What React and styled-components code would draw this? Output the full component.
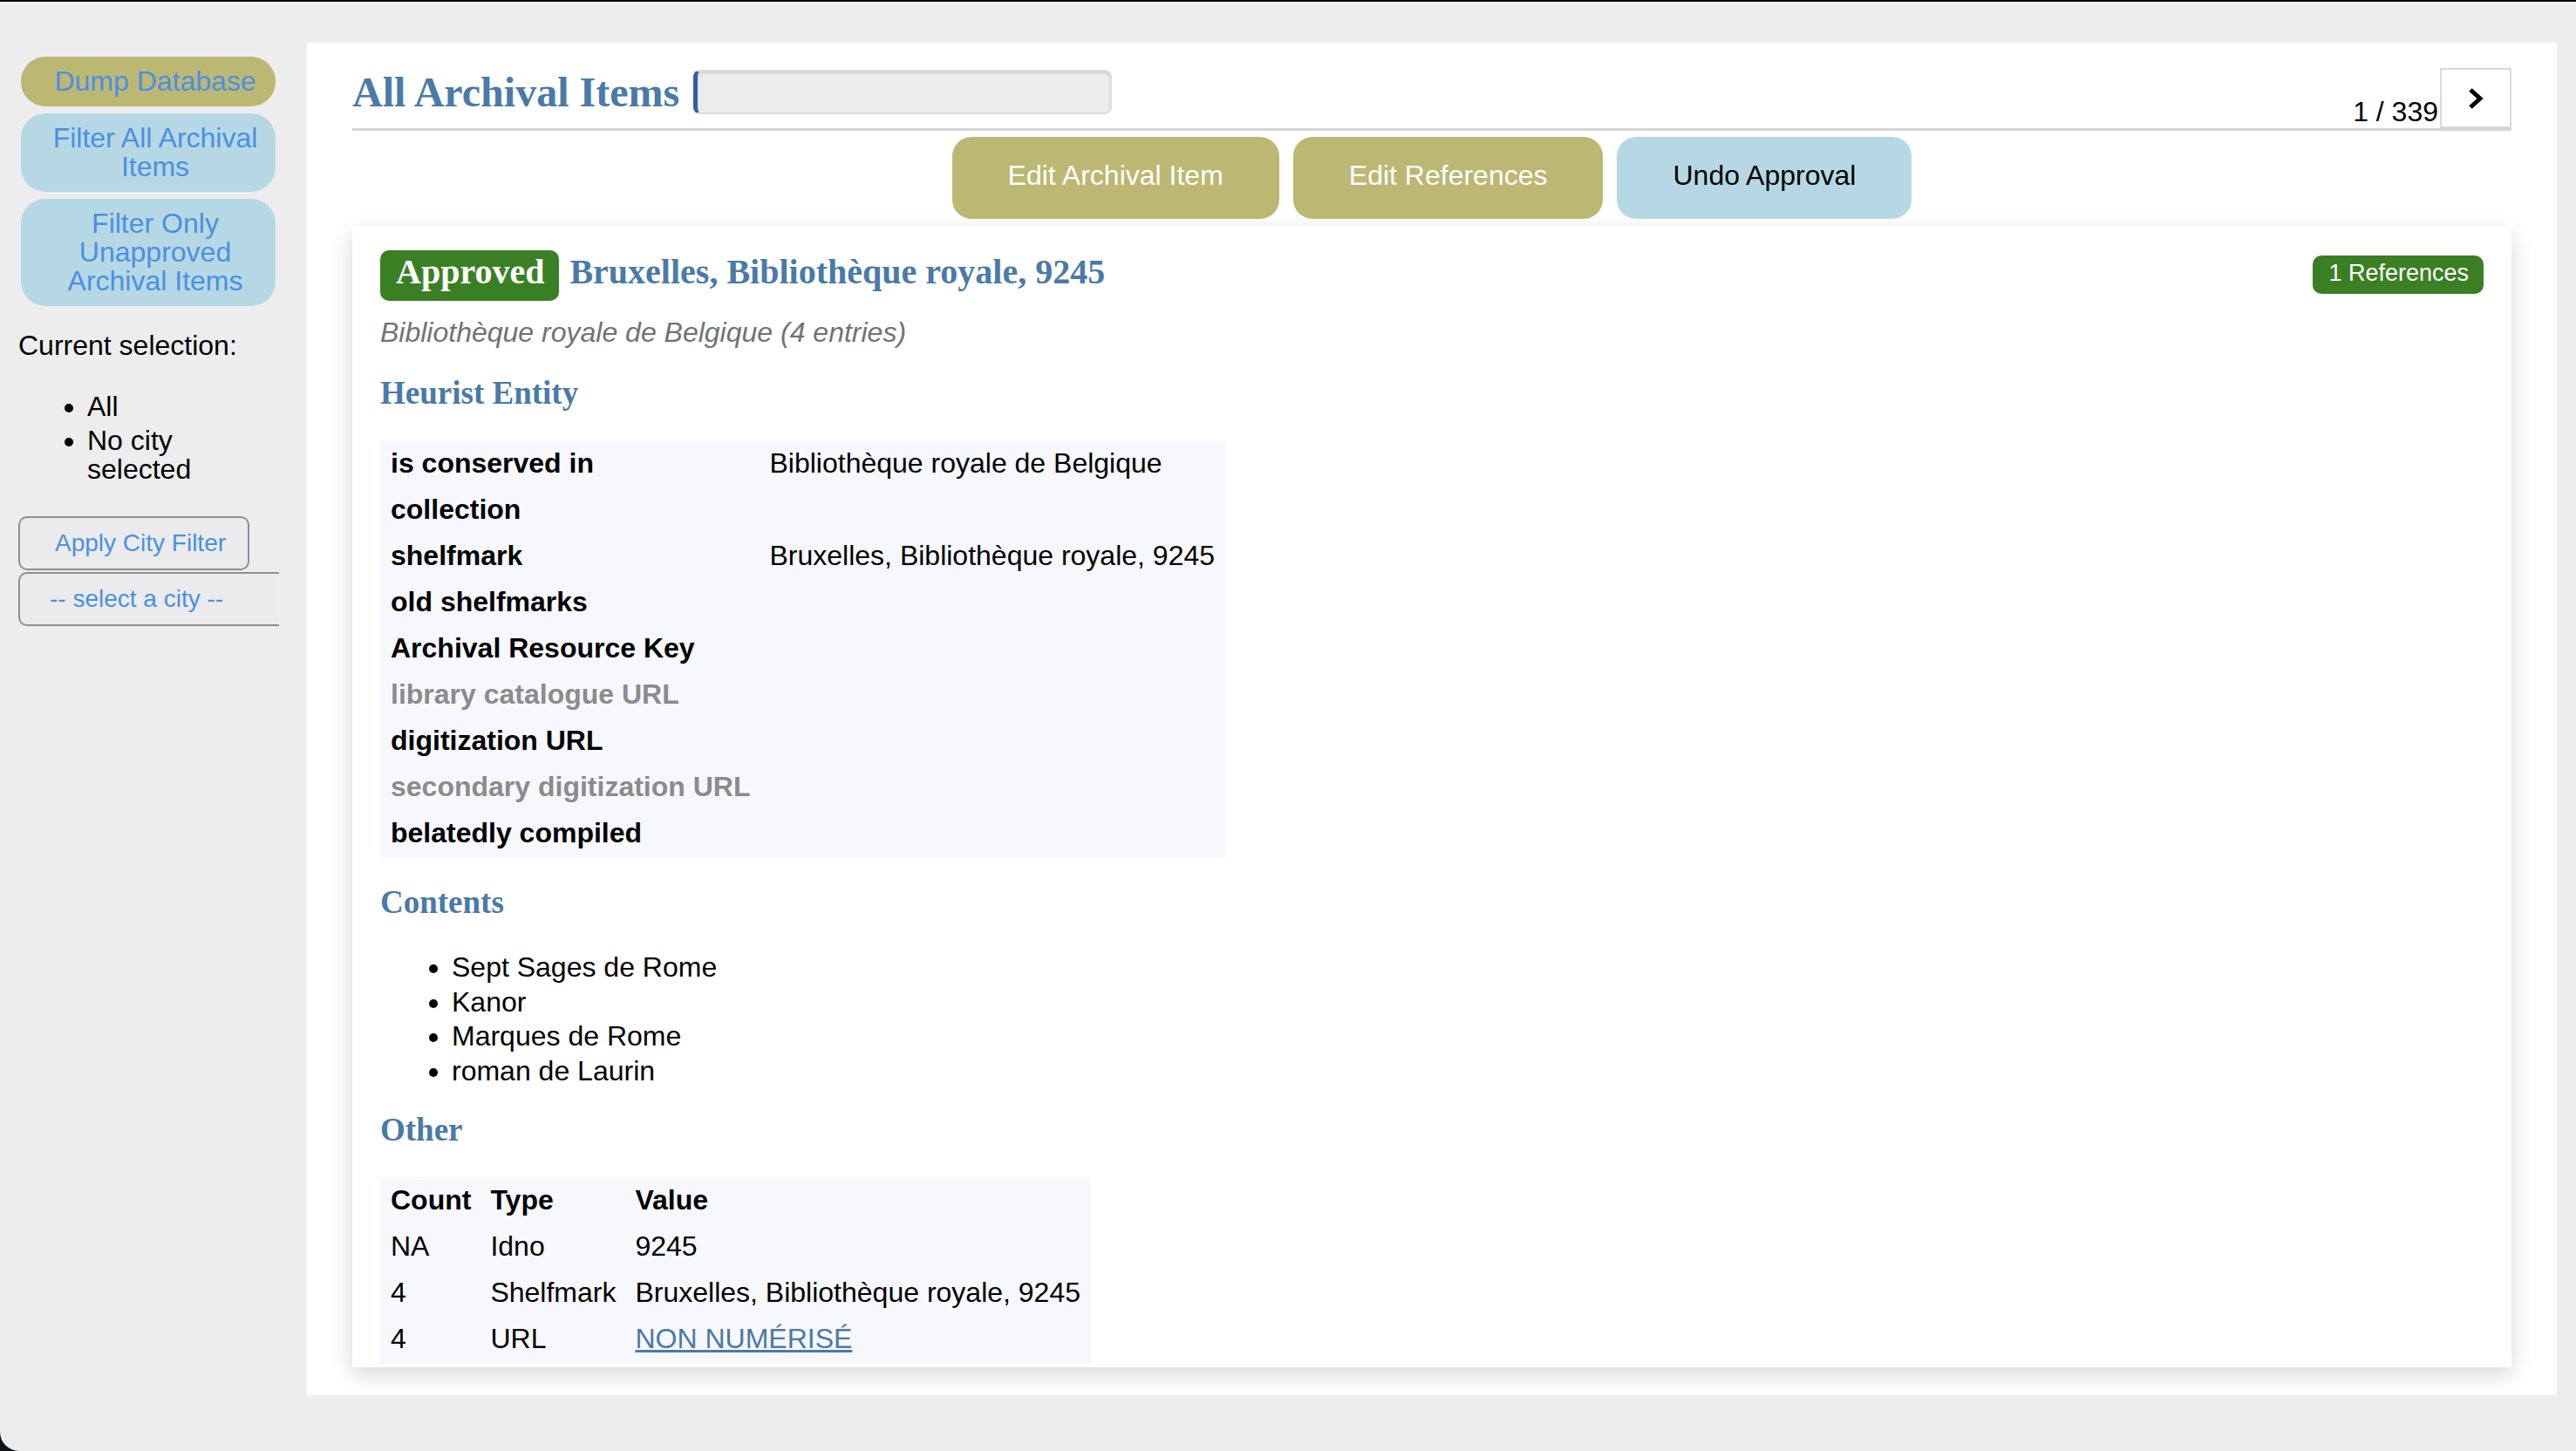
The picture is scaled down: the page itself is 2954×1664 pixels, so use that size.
import React from 'react';
import styled, { createGlobalStyle } from 'styled-components';

const GlobalStyle = createGlobalStyle`
  html { background: #0d1418; }
  body {
    margin: 0;
    font-family: 'Liberation Sans', Arial, sans-serif;
  }
`;

const sans = `'Liberation Sans', Arial, Helvetica, sans-serif`;
const serif = `'Liberation Serif', 'Times New Roman', serif`;
const headingBlue = '#4a7aa7';
const green = '#3a7f24';

const Screen = styled.div`
  display: flex;
  align-items: flex-start;
  box-sizing: border-box;
  height: 1664px;
  background: #ededed;
  border-top: 2px solid #000;
  border-bottom-left-radius: 22px;
  overflow: hidden;
`;

/* ---------- sidebar ---------- */

const Sidebar = styled.aside`
  flex: 0 0 352px;
  min-width: 0;
  box-sizing: border-box;
  padding: 63px 32px 0 21px;
  font-family: ${sans};
  font-size: 32px;
  color: #000;
`;

const SideButtons = styled.div`
  display: flex;
  flex-direction: column;
  gap: 8px;
  margin-left: 3px;
`;

const SideButton = styled.button`
  width: 292px;
  padding: 12px 4px 12px 20px;
  border: none;
  border-radius: 28px;
  background: ${p => (p.$tone === 'olive' ? '#bdb774' : '#b6d8e4')};
  color: #4a90e2;
  font: 32px/33px ${sans};
  text-align: center;
`;

const SelectionLabel = styled.p`
  margin: 27px 0 0;
  line-height: 37px;
`;

const SelectionList = styled.ul`
  width: 216px;
  margin: 35px 0 0;
  padding-left: 79px;
  li {
    line-height: 33px;
    margin-bottom: 6px;
  }
  li:last-child { margin-bottom: 0; }
`;

const CityButton = styled.button`
  display: block;
  box-sizing: border-box;
  width: 265px;
  height: 62px;
  margin-top: 37px;
  padding: 0 20px 0 40px;
  border: 2px solid #8e8e95;
  border-radius: 10px;
  background: #ebebee;
  color: #4a90e2;
  font: 28px/32px ${sans};
  text-align: left;
  white-space: nowrap;
`;

const SelectClip = styled.div`
  width: 299px;
  margin-top: 2px;
  overflow: hidden;
`;

const CitySelect = styled.select`
  appearance: none;
  box-sizing: border-box;
  width: 340px;
  height: 62px;
  padding: 0 0 0 34px;
  border: 2px solid #8e8e95;
  border-radius: 10px;
  background: #ebebee;
  color: #4a90e2;
  font: 28px/32px ${sans};
`;

/* ---------- main panel ---------- */

const Panel = styled.main`
  flex: 1;
  margin: 47px 22px 0 0;
  padding: 29px 52px 32px;
  background: #fff;
  font-family: ${sans};
  font-size: 32px;
  color: #000;
`;

const HeaderRow = styled.div`
  display: flex;
  justify-content: space-between;
  align-items: flex-end;
  border-bottom: 3px solid #d6d6d6;
`;

const HeaderLeft = styled.div`
  display: flex;
  align-items: center;
  gap: 16px;
  margin-bottom: 14px;
`;

const PageTitle = styled.h1`
  margin: 0;
  font: bold 48px/55px ${serif};
  color: ${headingBlue};
`;

const SearchInput = styled.input`
  box-sizing: border-box;
  width: 480px;
  height: 51px;
  border: 2px solid #dcdcdc;
  border-left: 5px solid #2b5fad;
  border-radius: 8px;
  background: #ececec;
  box-shadow: inset 0 2px 3px rgba(0, 0, 0, 0.12);
  outline: none;
`;

const Pager = styled.div`
  display: flex;
  align-items: flex-end;
`;

const PageCount = styled.span`
  line-height: 37px;
`;

const NextButton = styled.button`
  box-sizing: border-box;
  width: 82px;
  height: 69px;
  margin-left: 2px;
  display: flex;
  align-items: center;
  justify-content: center;
  border: 2px solid #d9d9d9;
  background: #fff;
  padding: 0;
`;

const ActionRow = styled.div`
  display: flex;
  justify-content: center;
  gap: 16px;
  margin: 7px 0 8px;
`;

const ActionButton = styled.button`
  padding: 26px 64px 31px;
  border: none;
  border-radius: 22px;
  background: ${p => (p.$tone === 'olive' ? '#bdb774' : '#b6d8e4')};
  color: ${p => (p.$tone === 'olive' ? '#fff' : '#000')};
  font: 32px/37px ${sans};
`;

/* ---------- record card ---------- */

const Card = styled.section`
  padding: 28px 32px 4px;
  background: #fff;
  box-shadow: 0 8px 24px rgba(0, 0, 0, 0.16);
`;

const TitleRow = styled.div`
  display: flex;
  justify-content: space-between;
  align-items: flex-start;
`;

const TitleLeft = styled.div`
  display: flex;
  align-items: baseline;
  gap: 12px;
`;

const StatusBadge = styled.span`
  padding: 5px 17px 13px 18px;
  border-radius: 10px;
  background: ${green};
  color: #fff;
  font: bold 40px/40px ${serif};
`;

const RecordTitle = styled.h2`
  margin: 0;
  font: bold 40px/40px ${serif};
  color: ${headingBlue};
`;

const RefBadge = styled.span`
  margin-top: 6px;
  padding: 5px 17px 9px 18px;
  border-radius: 10px;
  background: ${green};
  color: #fff;
  font: 27px/30px ${sans};
`;

const Subtitle = styled.p`
  margin: 18px 0 0;
  font-style: italic;
  line-height: 37px;
  color: #6f7276;
`;

const SectionHeading = styled.h3`
  margin: 29px 0 33px;
  font: bold 37px/43px ${serif};
  color: ${headingBlue};
`;

const DataTable = styled.table`
  background: #f7f8fd;
  border-spacing: 2px;
  font-size: 32px;
  line-height: 37px;
  th, td {
    padding: 6px 10px 8px;
    text-align: left;
    vertical-align: top;
  }
  th { font-weight: bold; }
`;

const FieldName = styled.td`
  font-weight: bold;
  color: ${p => (p.$muted ? '#8b8b8b' : '#000')};
`;

const ContentList = styled.ul`
  margin: 37px 0 0;
  padding-left: 82px;
  & + h3 { margin-top: 29px; }
  li {
    line-height: 33px;
    margin-bottom: 6.5px;
  }
  li:last-child { margin-bottom: 0; }
`;

const ValueLink = styled.a`
  color: ${headingBlue};
  text-decoration: underline;
`;

const fields = [
  { name: 'is conserved in', value: 'Bibliothèque royale de Belgique' },
  { name: 'collection' },
  { name: 'shelfmark', value: 'Bruxelles, Bibliothèque royale, 9245' },
  { name: 'old shelfmarks' },
  { name: 'Archival Resource Key' },
  { name: 'library catalogue URL', muted: true },
  { name: 'digitization URL' },
  { name: 'secondary digitization URL', muted: true },
  { name: 'belatedly compiled' },
];

const contents = ['Sept Sages de Rome', 'Kanor', 'Marques de Rome', 'roman de Laurin'];

const others = [
  { count: 'NA', type: 'Idno', value: '9245' },
  { count: '4', type: 'Shelfmark', value: 'Bruxelles, Bibliothèque royale, 9245' },
  { count: '4', type: 'URL', value: 'NON NUMÉRISÉ', link: true },
];

export default function App() {
  return (
    <>
      <GlobalStyle />
      <Screen>
        <Sidebar>
          <SideButtons>
            <SideButton $tone="olive">Dump Database</SideButton>
            <SideButton>Filter All Archival Items</SideButton>
            <SideButton>Filter Only Unapproved Archival Items</SideButton>
          </SideButtons>
          <SelectionLabel>Current selection:</SelectionLabel>
          <SelectionList>
            <li>All</li>
            <li>No city selected</li>
          </SelectionList>
          <CityButton>Apply City Filter</CityButton>
          <SelectClip>
            <CitySelect defaultValue="">
              <option value="">-- select a city --</option>
            </CitySelect>
          </SelectClip>
        </Sidebar>

        <Panel>
          <HeaderRow>
            <HeaderLeft>
              <PageTitle>All Archival Items</PageTitle>
              <SearchInput type="text" />
            </HeaderLeft>
            <Pager>
              <PageCount>1 / 339</PageCount>
              <NextButton aria-label="next">
                <svg width="18" height="24" viewBox="0 0 18 24">
                  <polyline points="3,2 14,12 3,22" fill="none" stroke="#000" strokeWidth="5" />
                </svg>
              </NextButton>
            </Pager>
          </HeaderRow>

          <ActionRow>
            <ActionButton $tone="olive">Edit Archival Item</ActionButton>
            <ActionButton $tone="olive">Edit References</ActionButton>
            <ActionButton>Undo Approval</ActionButton>
          </ActionRow>

          <Card>
            <TitleRow>
              <TitleLeft>
                <StatusBadge>Approved</StatusBadge>
                <RecordTitle>Bruxelles, Bibliothèque royale, 9245</RecordTitle>
              </TitleLeft>
              <RefBadge>1 References</RefBadge>
            </TitleRow>
            <Subtitle>Bibliothèque royale de Belgique (4 entries)</Subtitle>

            <SectionHeading>Heurist Entity</SectionHeading>
            <DataTable>
              <tbody>
                {fields.map(f => (
                  <tr key={f.name}>
                    <FieldName $muted={f.muted}>{f.name}</FieldName>
                    <td>{f.value}</td>
                  </tr>
                ))}
              </tbody>
            </DataTable>

            <SectionHeading>Contents</SectionHeading>
            <ContentList>
              {contents.map(c => <li key={c}>{c}</li>)}
            </ContentList>

            <SectionHeading>Other</SectionHeading>
            <DataTable>
              <thead>
                <tr>
                  <th>Count</th>
                  <th>Type</th>
                  <th>Value</th>
                </tr>
              </thead>
              <tbody>
                {others.map(o => (
                  <tr key={o.type}>
                    <td>{o.count}</td>
                    <td>{o.type}</td>
                    <td>{o.link ? <ValueLink href="#">{o.value}</ValueLink> : o.value}</td>
                  </tr>
                ))}
              </tbody>
            </DataTable>
          </Card>
        </Panel>
      </Screen>
    </>
  );
}
